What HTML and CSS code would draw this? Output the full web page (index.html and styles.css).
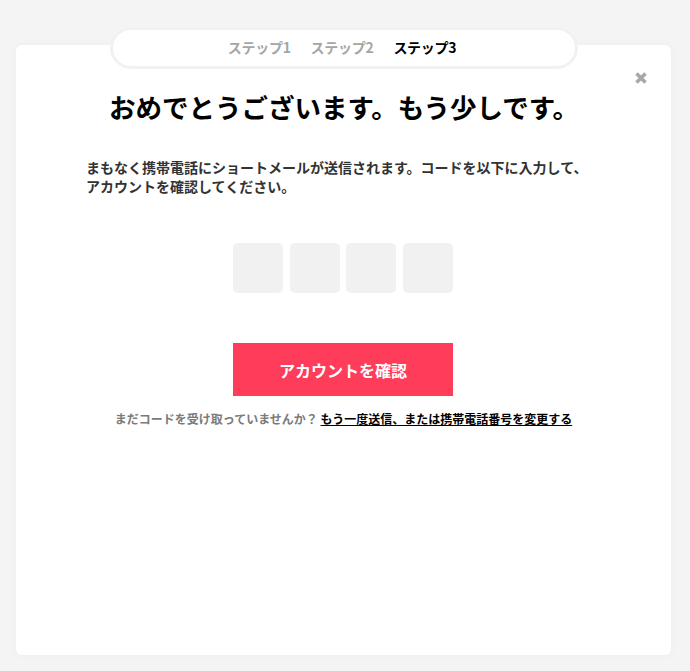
FILE: index.html
```html
<!DOCTYPE html>
<html lang="ja">
<head>
<meta charset="utf-8">
<title>ステップ3</title>
<link rel="stylesheet" href="styles.css">
</head>
<body>
<div class="card">
  <div class="steps">
    <span class="step">ステップ1</span>
    <span class="step">ステップ2</span>
    <span class="step active">ステップ3</span>
  </div>
  <button class="close" aria-label="閉じる">
    <svg width="14" height="14" viewBox="0 0 14 14"><path d="M2.5 2.5 L11.5 11.5 M11.5 2.5 L2.5 11.5" stroke="#a8a8a8" stroke-width="3.6" stroke-linecap="butt"/></svg>
  </button>
  <h1 class="title">おめでとうございます。もう少しです。</h1>
  <p class="lead">まもなく携帯電話にショートメールが送信されます。コードを以下に入力して、<br>アカウントを確認してください。</p>
  <div class="code">
    <span class="digit"></span>
    <span class="digit"></span>
    <span class="digit"></span>
    <span class="digit"></span>
  </div>
  <button class="confirm">アカウントを確認</button>
  <p class="resend">まだコードを受け取っていませんか？ <a href="#" class="resend-link">もう一度送信、または携帯電話番号を変更する</a></p>
</div>
</body>
</html>
```
FILE: styles.css
```css
html, body {
  margin: 0;
  padding: 0;
  background: #f4f4f4;
}
body {
  font-family: "Noto Sans CJK JP", "Noto Sans", sans-serif;
  width: 690px;
  height: 671px;
  overflow: hidden;
}
.card {
  position: relative;
  box-sizing: border-box;
  margin: 45px 0 0 16px;
  width: 655px;
  height: 610px;
  background: #fff;
  border-radius: 6px;
  box-shadow: 0 0 8px rgba(0, 0, 0, 0.03);
  display: flex;
  flex-direction: column;
  align-items: center;
}
.steps {
  box-sizing: border-box;
  margin-top: -18px;
  width: 468px;
  height: 42px;
  border: 3px solid #f1f1f1;
  border-radius: 21px;
  background: #fff;
  display: flex;
  justify-content: center;
  align-items: center;
  gap: 20px;
  padding: 0 3px 3px 0;
}
.step {
  font-size: 14px;
  font-weight: 700;
  color: #a6a6a6;
  line-height: 20px;
  letter-spacing: -0.3px;
}
.step.active {
  color: #000;
}
.close {
  position: absolute;
  top: 26px;
  right: 23px;
  width: 14px;
  height: 14px;
  padding: 0;
  border: 0;
  background: none;
  display: block;
}
.close svg {
  display: block;
}
.title {
  margin: 20px 0 0 1px;
  font-size: 26.5px;
  font-weight: 700;
  line-height: 36px;
  color: #000;
}
.lead {
  align-self: flex-start;
  margin: 33px 0 0 70px;
  font-size: 14px;
  font-weight: 700;
  line-height: 19px;
  color: #333;
}
.code {
  margin-top: 47px;
  margin-right: 1px;
  display: flex;
  gap: 6.67px;
}
.digit {
  width: 50px;
  height: 50px;
  border-radius: 5px;
  background: #f1f1f1;
}
.confirm {
  margin-top: 50px;
  margin-right: 1px;
  width: 220px;
  height: 53px;
  border: 0;
  background: #ff3c5a;
  color: #fff;
  font-family: inherit;
  font-size: 16px;
  font-weight: 700;
  padding: 0;
}
.resend {
  margin: 15px 0 0 0;
  font-size: 12px;
  font-weight: 700;
  line-height: 16px;
  color: #7a7a7a;
}
.resend-link {
  color: #000;
  text-decoration: underline;
}
```
